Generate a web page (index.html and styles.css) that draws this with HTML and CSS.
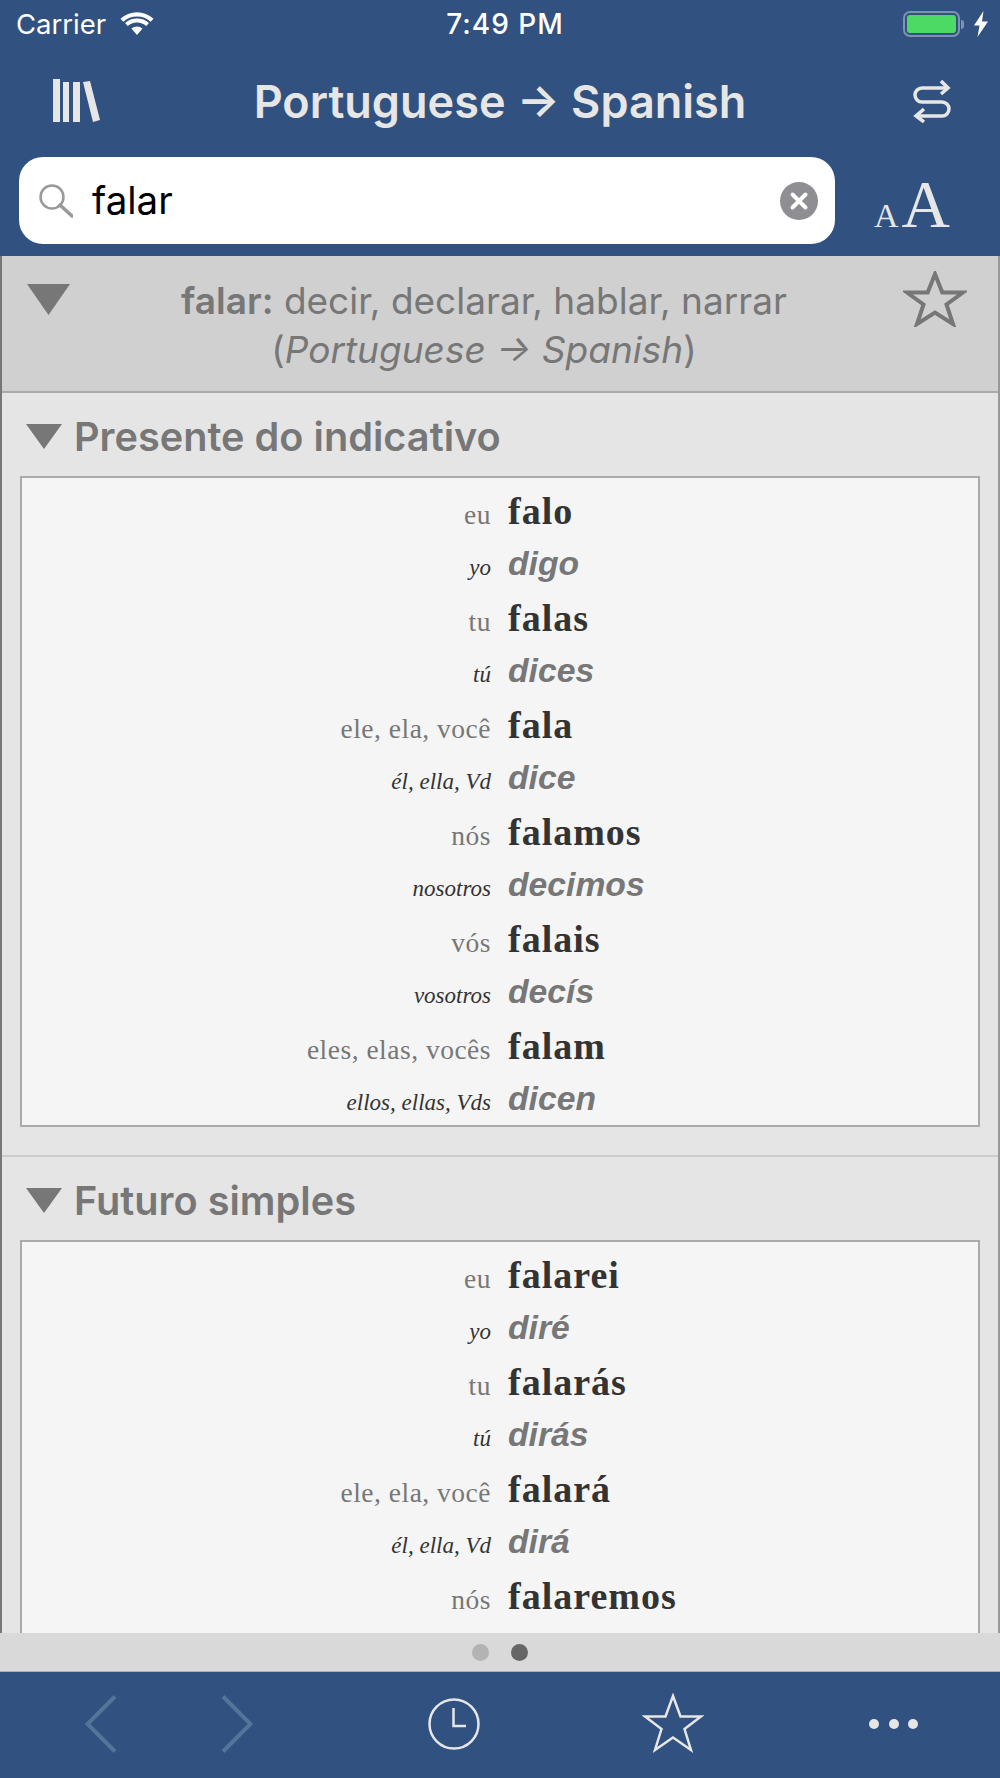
FILE: index.html
```html
<!DOCTYPE html>
<html lang="pt">
<head>
<meta charset="utf-8">
<title>Portuguese → Spanish</title>
<link rel="stylesheet" href="styles.css">
</head>
<body>
<div class="app">
  <header class="top">
    <div class="status">
      <div class="status-left">
        <span class="carrier">Carrier</span>
        <svg class="wifi" viewBox="0 0 34 23"><path d="M17 23l-5.600-6.400a8.600 8.600 0 0 1 11.200 0zM17 10.500a14 14 0 0 1 9.300 3.500l2.600-3a18 18 0 0 0-23.800 0l2.600 3A14 14 0 0 1 17 10.500zM17 4.500a20 20 0 0 1 13.700 5.300l2.800-3.100A24.500 24.500 0 0 0 .5 6.700l2.800 3.100A20 20 0 0 1 17 4.500z"/></svg>
      </div>
      <span class="time">7:49 PM</span>
      <div class="status-right">
        <span class="battery"><span class="battery-fill"></span></span>
        <span class="battery-cap"></span>
        <svg class="bolt" viewBox="0 0 14 26"><path d="M9.500 0L0 14.500h5.500L3.500 26 14 10.500H8z"/></svg>
      </div>
    </div>
    <div class="nav">
      <svg class="lib" viewBox="0 0 47 43"><path d="M0 0h7v43H0zM10 3h6v40h-6zM20 3h7v40h-7zM30 3l7-1 10 39-7 2z"/></svg>
      <h1 class="title">Portuguese → Spanish</h1>
      <svg class="swap" viewBox="0 0 38 44"><g fill="none" stroke="#e6e6e6" stroke-width="3.500"><path d="M35 9H9a7 7 0 0 0-7 7 7 7 0 0 0 7 7h20a7 7 0 0 1 7 7 7 7 0 0 1-7 7H3"/><path d="M28 2l7 7-7 6M11 30l-8 7 8 6"/></g></svg>
    </div>
    <div class="search-row">
      <div class="search">
        <svg class="glass" viewBox="0 0 34 34"><circle cx="13" cy="13" r="11.500" fill="none" stroke="#999" stroke-width="2.500"/><path d="M21 21l12 11" stroke="#999" stroke-width="3.500" stroke-linecap="round"/></svg>
        <span class="query">falar</span>
        <svg class="clear" viewBox="0 0 38 38"><circle cx="19" cy="19" r="19" fill="#8e8e93"/><path d="M12.500 12.500l13 13M25.500 12.500l-13 13" stroke="#fff" stroke-width="4" stroke-linecap="round"/></svg>
      </div>
      <div class="aa"><span class="a-small">A</span><span class="a-big">A</span></div>
    </div>
  </header>

  <main class="content">
    <section class="entry">
      <svg class="entry-tri" viewBox="0 0 43 31"><path d="M0 0h43L21.500 31z"/></svg>
      <p class="entry-text"><b>falar:</b> decir, declarar, hablar, narrar<br>(<i>Portuguese → Spanish</i>)</p>
      <svg class="entry-star" viewBox="0 0 64 56"><path d="M32 3l7.300 18.500H60L43.500 33.500 50 53 32 41.500 14 53l6.500-19.500L4 21.500h20.700z" fill="none" stroke="#777" stroke-width="4"/></svg>
    </section>

    <section class="tense">
      <h2 class="tense-head"><svg class="tense-tri" viewBox="0 0 36 25"><path d="M0 0h36L18 25z"/></svg>Presente do indicativo</h2>
      <div class="table">
        <span class="pt-p">eu</span><span class="pt-v">falo</span>
        <span class="es-p">yo</span><span class="es-v">digo</span>
        <span class="pt-p">tu</span><span class="pt-v">falas</span>
        <span class="es-p">tú</span><span class="es-v">dices</span>
        <span class="pt-p">ele, ela, você</span><span class="pt-v">fala</span>
        <span class="es-p">él, ella, Vd</span><span class="es-v">dice</span>
        <span class="pt-p">nós</span><span class="pt-v">falamos</span>
        <span class="es-p">nosotros</span><span class="es-v">decimos</span>
        <span class="pt-p">vós</span><span class="pt-v">falais</span>
        <span class="es-p">vosotros</span><span class="es-v">decís</span>
        <span class="pt-p">eles, elas, vocês</span><span class="pt-v">falam</span>
        <span class="es-p">ellos, ellas, Vds</span><span class="es-v">dicen</span>
      </div>
    </section>

    <section class="tense">
      <h2 class="tense-head"><svg class="tense-tri" viewBox="0 0 36 25"><path d="M0 0h36L18 25z"/></svg>Futuro simples</h2>
      <div class="table table-open">
        <span class="pt-p">eu</span><span class="pt-v">falarei</span>
        <span class="es-p">yo</span><span class="es-v">diré</span>
        <span class="pt-p">tu</span><span class="pt-v">falarás</span>
        <span class="es-p">tú</span><span class="es-v">dirás</span>
        <span class="pt-p">ele, ela, você</span><span class="pt-v">falará</span>
        <span class="es-p">él, ella, Vd</span><span class="es-v">dirá</span>
        <span class="pt-p">nós</span><span class="pt-v">falaremos</span>
      </div>
    </section>
  </main>

  <div class="pager"><span class="dot"></span><span class="dot dot-on"></span></div>

  <footer class="toolbar">
    <svg class="tb-back" viewBox="0 0 32 58"><path d="M30 1.500L2.500 29 30 56.500" fill="none" stroke="#557499" stroke-width="4"/></svg>
    <svg class="tb-fwd" viewBox="0 0 32 58"><path d="M2 1.500L29.500 29 2 56.500" fill="none" stroke="#557499" stroke-width="4"/></svg>
    <svg class="tb-clock" viewBox="0 0 52 52"><circle cx="26" cy="26" r="24.500" fill="none" stroke="#e6e6e6" stroke-width="2.500"/><path d="M25.500 10v18H38" fill="none" stroke="#e6e6e6" stroke-width="2.500"/></svg>
    <svg class="tb-star" viewBox="0 0 62 60"><path d="M31 3l7.500 20.500H59L42.500 36 49 57 31 44.500 13 57l6.500-21L3 23.500h20.500z" fill="none" stroke="#e6e6e6" stroke-width="2.500"/></svg>
    <div class="tb-more"><span></span><span></span><span></span></div>
  </footer>
</div>
</body>
</html>
```
FILE: styles.css
```css
* { box-sizing: border-box; }
html, body { margin: 0; padding: 0; }
body { width: 1000px; height: 1778px; overflow: hidden; background: #315180; font-family: Inter, "Liberation Sans", sans-serif; }
.app { width: 1000px; height: 1778px; display: flex; flex-direction: column; overflow: hidden; }

.top { height: 256px; flex: none; background: #315180; }
.status { height: 48px; padding: 0 12px 0 16px; display: flex; align-items: center; justify-content: space-between; position: relative; color: #fff; }
.status-left { display: flex; align-items: center; gap: 14px; }
.carrier { font-size: 27.500px; line-height: 52px; }
.wifi { width: 34px; height: 23px; fill: #fff; margin-top: -1px; }
.time { position: absolute; left: 10px; right: 0; text-align: center; font-size: 28px; letter-spacing: 1px; font-weight: 500; line-height: 52px; }
.status-right { display: flex; align-items: center; }
.battery { width: 57px; height: 26px; border: 2px solid #7f92b0; border-radius: 7px; padding: 2px; display: block; }
.battery-fill { display: block; height: 100%; background: #4cd964; border-radius: 3px; }
.battery-cap { width: 3px; height: 9px; background: #7f92b0; border-radius: 0 3px 3px 0; margin-left: 1px; }
.bolt { width: 14px; height: 26px; fill: #fff; margin-left: 10px; }

.nav { height: 109px; position: relative; display: flex; align-items: flex-start; padding-top: 31px; justify-content: space-between; }
.lib { width: 47px; height: 43px; fill: #e6e6e6; margin-left: 53px; }
.swap { width: 38px; height: 44px; margin-right: 49px; }
.title { position: absolute; left: 0; right: 0; top: 30px; margin: 0; text-align: center; font-size: 45px; line-height: 48px; font-weight: 600; color: #e6e6e6; }

.search-row { display: flex; height: 87px; padding-left: 19px; }
.search { width: 816px; height: 87px; background: #fff; border-radius: 24px; display: flex; align-items: center; padding: 0 17px 0 20px; }
.glass { width: 34px; height: 34px; flex: none; }
.query { flex: 1; margin-left: 19px; font-size: 38.500px; line-height: 85px; color: #000; }
.clear { width: 38px; height: 38px; flex: none; }
.aa { margin-left: 39px; display: flex; align-items: baseline; height: 87px; font-family: "Liberation Serif", serif; color: #e6e6e6; line-height: 94px; }
.a-small { font-size: 34px; }
.a-big { font-size: 67px; margin-left: 3px; }

.content { flex: 1; min-height: 0; overflow: hidden; background: #e5e5e5; border-left: 2px solid #777; border-right: 2px solid #999; }
.entry { height: 137px; background: #d0d0d0; border-bottom: 2px solid #aaa; position: relative; }
.entry-tri { position: absolute; left: 25px; top: 28px; width: 43px; height: 31px; fill: #777; }
.entry-star { position: absolute; right: 31px; top: 15px; width: 64px; height: 56px; }
.entry-text { margin: 0; padding-top: 20px; width: 964px; text-align: center; font-size: 37px; line-height: 49px; color: #777; }
.entry-text b { font-weight: 600; }

.tense { border-bottom: 2px solid #ccc; padding: 0 0 28px 18px; }
.tense-head { margin: 0; height: 83px; padding-top: 20px; display: flex; align-items: flex-start; font-size: 39.700px; line-height: 48px; font-weight: 600; color: #777; }
.tense-tri { width: 36px; height: 25px; fill: #777; margin: 11px 12px 0 6px; flex: none; }
.table { width: 960px; background: #f5f5f5; border: 2px solid #aaa; padding-top: 5px; display: grid; grid-template-columns: 469px 1fr; column-gap: 17px; grid-auto-rows: 53.500px; align-items: baseline; }
.table-open { padding-bottom: 80px; }
.pt-p, .es-p { text-align: right; white-space: nowrap; }
.pt-p { font-family: "Liberation Serif", serif; font-size: 27.500px; letter-spacing: .5px; color: #777; line-height: 53.500px; }
.pt-v { font-family: "Liberation Serif", serif; font-weight: 700; font-size: 38px; letter-spacing: 1px; color: #333; line-height: 53.500px; padding-top: 2px; }
.es-p { font-family: "Liberation Serif", serif; font-style: italic; font-size: 23px; color: #333; line-height: 53.500px; }
.es-v { font-family: "Liberation Sans", sans-serif; font-style: italic; font-weight: 700; font-size: 33.700px; color: #777; line-height: 53.500px; }

.pager { height: 38px; flex: none; background: #d9d9d9; display: flex; justify-content: center; align-items: center; gap: 22px; }
.dot { width: 17px; height: 17px; border-radius: 50%; background: #b3b3b3; }
.dot-on { background: #666; }

.toolbar { height: 107px; flex: none; background: #315180; border-top: 1px solid #b0b0b0; position: relative; }
.tb-back, .tb-fwd, .tb-clock, .tb-star, .tb-more { position: absolute; }
.tb-back { left: 85px; top: 23px; width: 32px; height: 58px; }
.tb-fwd { left: 221px; top: 23px; width: 32px; height: 58px; }
.tb-clock { left: 428px; top: 26px; width: 52px; height: 52px; }
.tb-star { left: 642px; top: 21px; width: 62px; height: 60px; }
.tb-more { left: 869px; top: 47px; display: flex; gap: 9.500px; }
.tb-more span { width: 10px; height: 10px; border-radius: 50%; background: #e6e6e6; }
```
